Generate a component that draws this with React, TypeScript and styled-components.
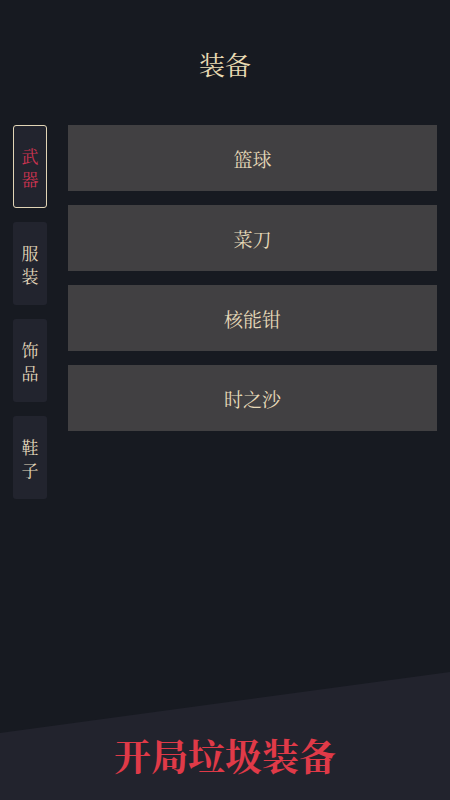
import React, { useState } from "react";
import styled, { createGlobalStyle } from "styled-components";

const GlobalStyle = createGlobalStyle`
  html, body { margin: 0; padding: 0; background: #171a21; }
  body { font-family: "Noto Serif CJK SC", "Noto Sans CJK SC", "Liberation Serif", serif; }
  * { box-sizing: border-box; }
`;

const Page = styled.div`
  width: 450px;
  height: 800px;
  background: #171a21;
  display: flex;
  flex-direction: column;
  overflow: hidden;
`;

const Title = styled.h1`
  margin: 0;
  height: 125px;
  padding-top: 44px;
  text-align: center;
  font-size: 26px;
  line-height: 40px;
  font-weight: 400;
  color: #eadcb4;
`;

const Body = styled.div`
  display: flex;
  gap: 21px;
  padding: 0 13px;
`;

const Tabs = styled.div`
  display: flex;
  flex-direction: column;
  gap: 14px;
  width: 34px;
`;

const Tab = styled.button<{ $active: boolean }>`
  width: 34px;
  height: 83px;
  padding: 0;
  border: ${(p) => (p.$active ? "1.5px solid #e2d5b6" : "1.5px solid transparent")};
  border-radius: 3px;
  background: #22242e;
  color: ${(p) => (p.$active ? "#cc3350" : "#e2d7bb")};
  font-family: inherit;
  font-size: 17px;
  line-height: 23px;
  display: flex;
  flex-direction: column;
  align-items: center;
  justify-content: center;
  cursor: pointer;
`;

const Items = styled.div`
  flex: 1;
  display: flex;
  flex-direction: column;
  gap: 14px;
`;

const Item = styled.div`
  height: 66px;
  background: #414042;
  display: flex;
  align-items: center;
  justify-content: center;
  color: #e6d9b8;
  font-size: 19px;
`;

const Footer = styled.div`
  margin-top: auto;
  height: 128px;
  background: #22232d;
  clip-path: polygon(0 61px, 100% 0, 100% 100%, 0 100%);
  display: flex;
  align-items: flex-end;
  justify-content: center;
  padding-bottom: 20px;
`;

const Slogan = styled.div`
  color: #e03a48;
  font-size: 37px;
  font-weight: 700;
  line-height: 50px;
  letter-spacing: 0;
`;

const data: Record<string, string[]> = {
  武器: ["篮球", "菜刀", "核能钳", "时之沙"],
  服装: ["皮夹克", "牛仔裤"],
  饰品: ["手表", "项链"],
  鞋子: ["运动鞋"],
};

export default function App() {
  const [tab, setTab] = useState("武器");
  return (
    <Page>
      <GlobalStyle />
      <Title>装备</Title>
      <Body>
        <Tabs>
          {Object.keys(data).map((k) => (
            <Tab key={k} $active={k === tab} onClick={() => setTab(k)}>
              {k.split("").map((c) => (
                <span key={c}>{c}</span>
              ))}
            </Tab>
          ))}
        </Tabs>
        <Items>
          {data[tab].map((it) => (
            <Item key={it}>{it}</Item>
          ))}
        </Items>
      </Body>
      <Footer>
        <Slogan>开局垃圾装备</Slogan>
      </Footer>
    </Page>
  );
}
